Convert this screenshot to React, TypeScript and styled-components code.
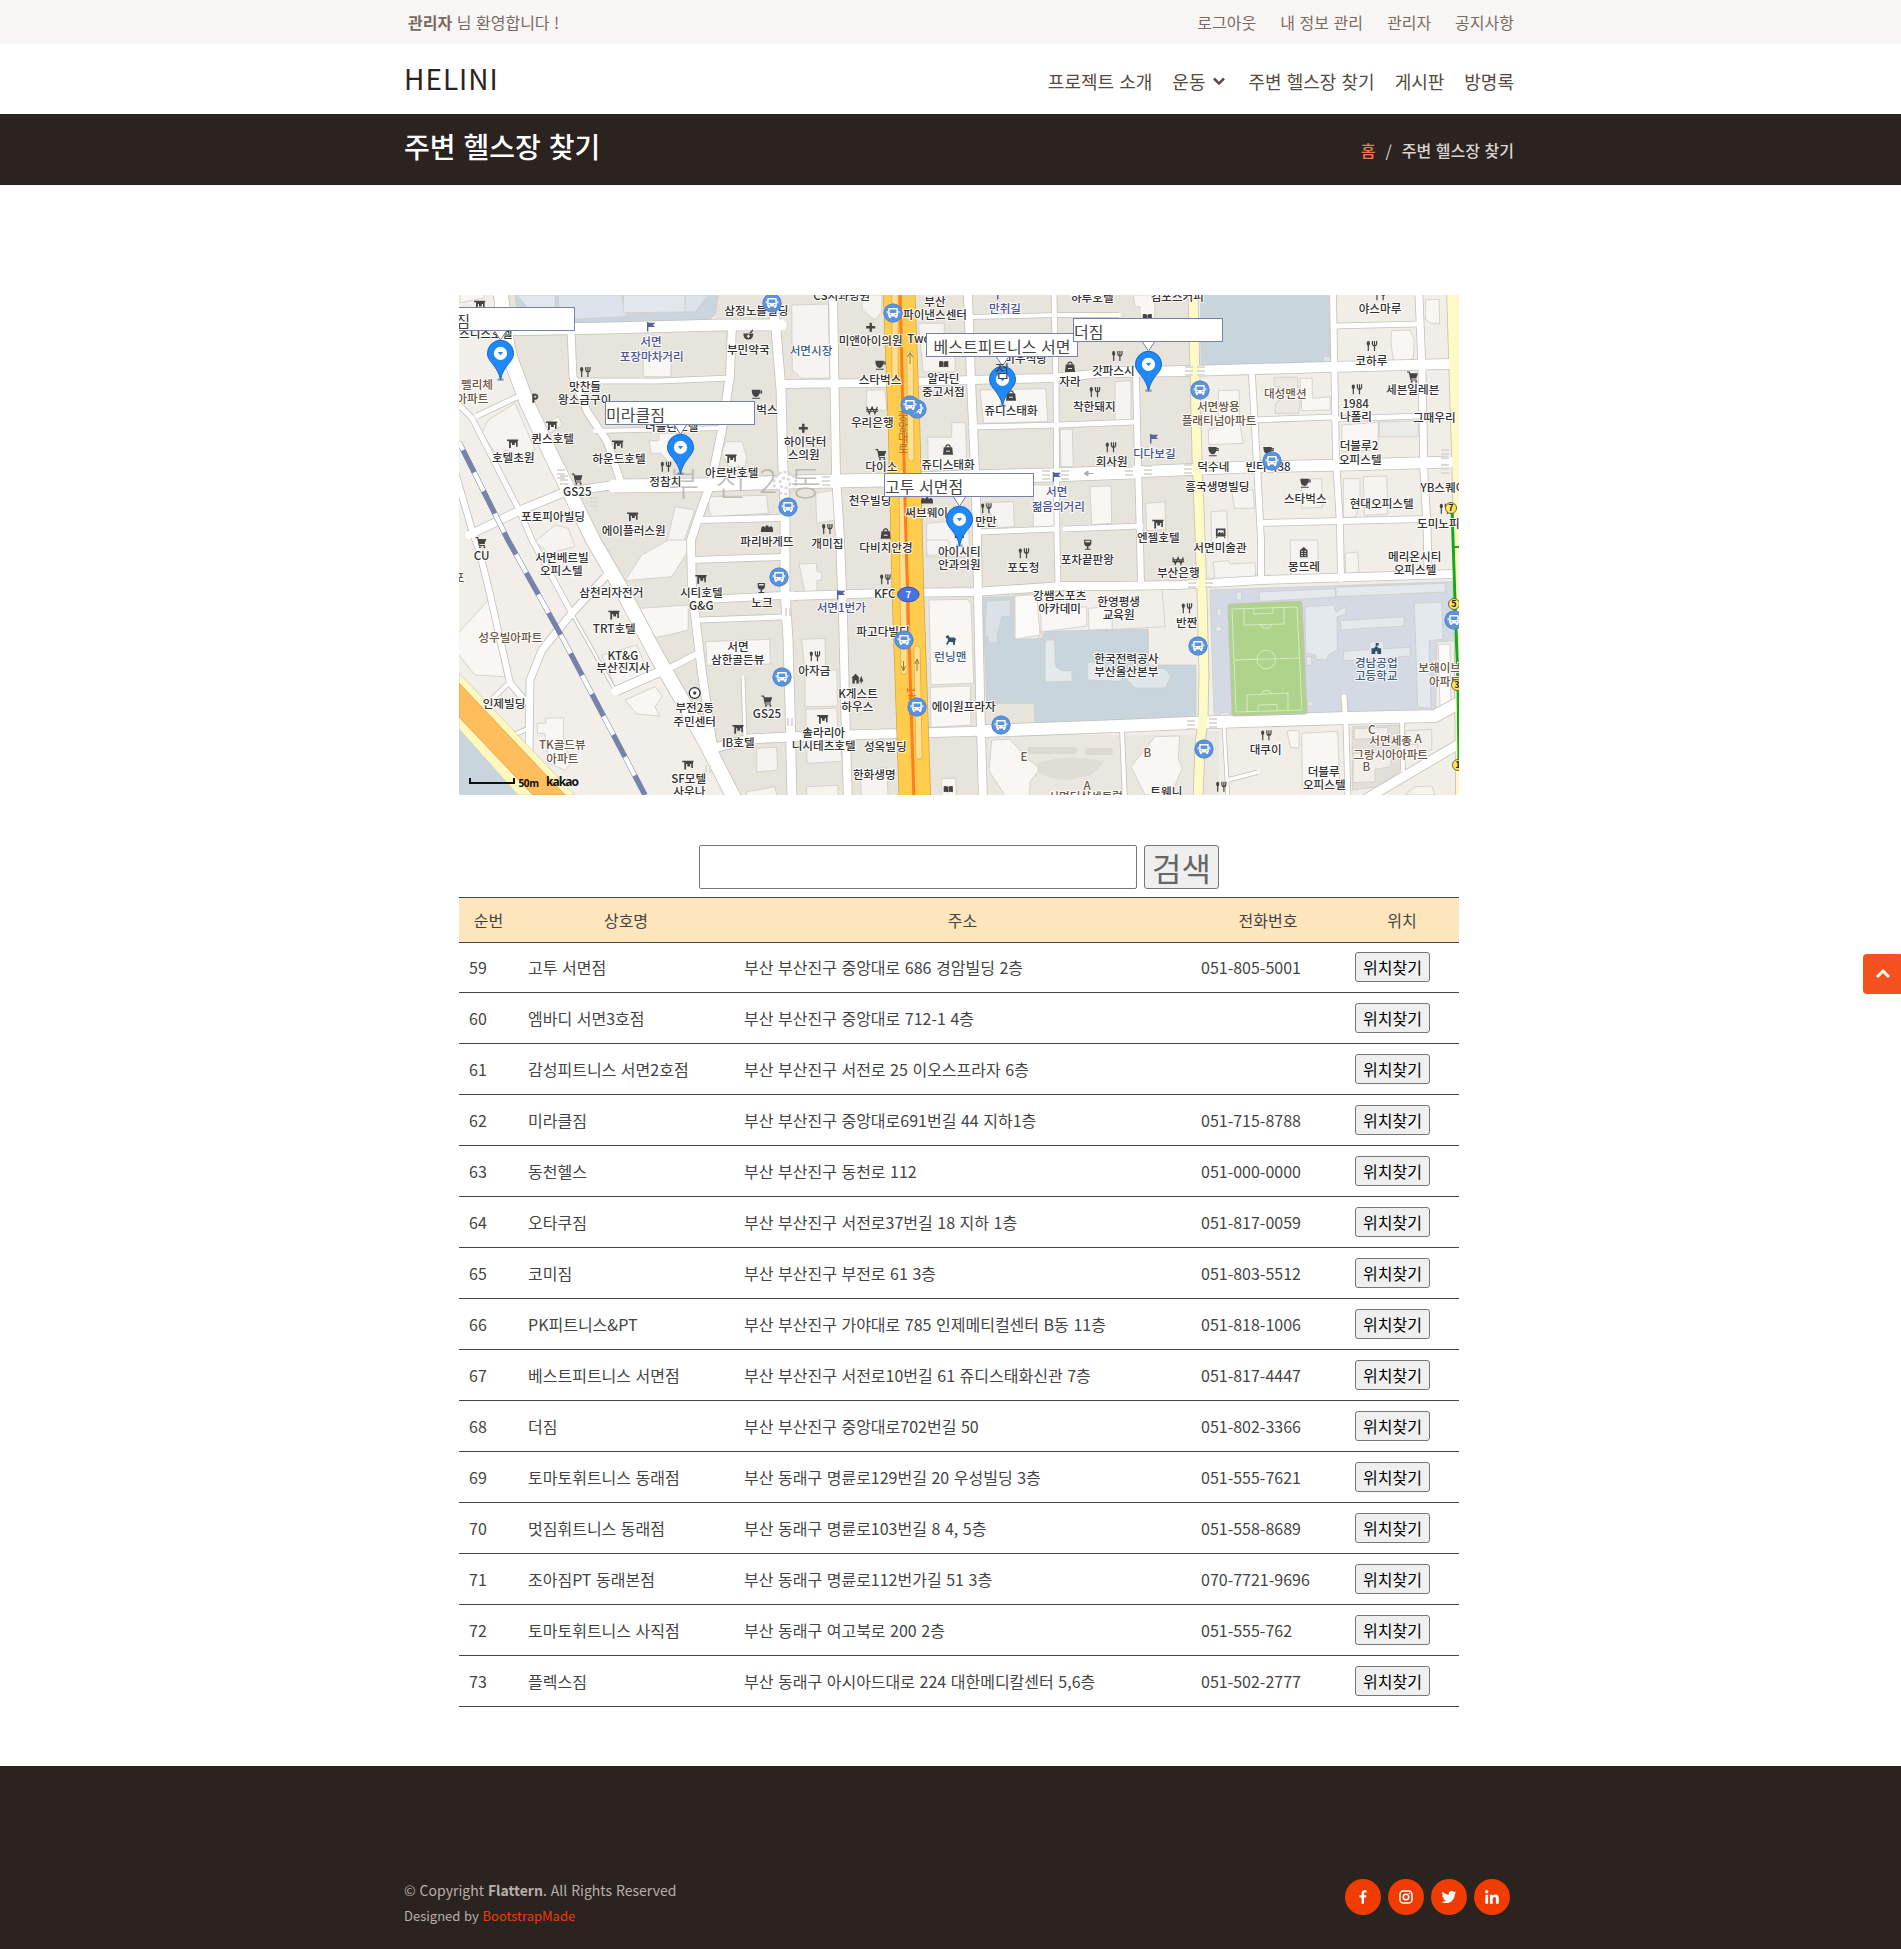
import React from "react";
import styled, { createGlobalStyle } from "styled-components";

const Global = createGlobalStyle`
  *, *::before, *::after { box-sizing: border-box; word-spacing: 0.06em; }
  body {
    margin: 0;
    background: #fff;
    color: #444;
    font: 16px/24px "Noto Sans CJK KR", "Noto Sans", sans-serif;
    overflow-x: hidden;
  }
  a { color: inherit; text-decoration: none; }
`;

/* ---------- page chrome ---------- */

const Viewport = styled.div`
  width: 100%;
  overflow: hidden;
  position: relative;
`;

const Page = styled.div`
  width: 1918px;
`;

const Container = styled.div`
  width: 1140px;
  margin: 0 auto;
  padding: 0 15px;
  display: flex;
  justify-content: space-between;
`;

const TopBar = styled.div`
  height: 44px;
  background: #f7f6f4;
  color: #7a6960;
  line-height: 44px;
`;

const Welcome = styled.div`
  padding-left: 4px;
`;

const TopMenu = styled.nav`
  display: flex;
  gap: 24px;
`;

const Header = styled.header`
  height: 70px;
  background: #fff;
`;

const Logo = styled.a`
  font-size: 28px;
  line-height: 68px;
  letter-spacing: 1px;
  color: #2b2320;
`;

const Nav = styled.nav`
  display: flex;
  gap: 20px;
  font-size: 18px;
  line-height: 74px;
  height: 70px;
  color: #554a44;
`;

const NavItem = styled.a`
  display: flex;
  align-items: center;
  height: 74px;
  svg { margin-left: 4px; margin-right: -1px; }
`;

const Breadcrumbs = styled.section`
  height: 71px;
  background: #2b2320;
  color: #fff;
`;

const Title = styled.h2`
  margin: 0;
  font-size: 28px;
  font-weight: 500;
  line-height: 65px;
`;

const Crumbs = styled.div`
  display: flex;
  gap: 10px;
  line-height: 72px;
  font-weight: 500;
  color: #dbd4d0;
`;

const CrumbLink = styled.a`
  color: #ef7a52;
`;

const CrumbSlash = styled.span`
  font-weight: 400;
`;

/* ---------- content ---------- */

const Main = styled.main`
  width: 1000px;
  margin: 0 auto;
  padding: 110px 0 59px;
`;

const MapFrame = styled.div`
  position: relative;
  width: 1000px;
  height: 500px;
  overflow: hidden;
  background: #e7e4dc;
  > svg { display: block; }
`;

const InfoWindow = styled.div<{ $x: number; $y: number; $center?: boolean }>`
  position: absolute;
  left: ${(p) => p.$x}px;
  top: ${(p) => p.$y}px;
  width: ${(p) => (p.$center ? 152 : 150)}px;
  height: 24px;
  background: #fff;
  border: 1px solid #7682a9;
  font-size: 16px;
  line-height: 24px;
  color: #444;
  text-align: ${(p) => (p.$center ? "center" : "left")};
`;

const Search = styled.form`
  display: flex;
  justify-content: center;
  gap: 7px;
  margin: 50px 0 8px;
`;

const SearchInput = styled.input`
  width: 438px;
  height: 44px;
  border: 1px solid #767676;
  border-radius: 2px;
  background: #fff;
  font: 30px "Noto Sans CJK KR", sans-serif;
`;

const SearchButton = styled.button`
  width: 75px;
  height: 44px;
  padding: 0;
  border: 1px solid #767676;
  border-radius: 3px;
  background: #efefef;
  color: #666;
  font: 32px/42px "Noto Sans CJK KR", sans-serif;
`;

const Table = styled.div`
  border-top: 1px solid #444;
`;

const Row = styled.div`
  display: grid;
  grid-template-columns: 59px 216px 457px 154px 114px;
  align-items: center;
  height: 51px;
  border-bottom: 1px solid #444;
`;

const HeadRow = styled(Row)`
  height: 45px;
  background: #fde5bd;
  text-align: center;
  & + div { height: 50px; padding-bottom: 1px; }
`;

const Cell = styled.div`
  padding: 0 10px;
  white-space: nowrap;
`;

const FindButton = styled.button`
  display: block;
  width: 75px;
  height: 30px;
  padding: 0;
  border: 1px solid #767676;
  border-radius: 3px;
  background: #efefef;
  color: #000;
  font: 16px/28px "Noto Sans CJK KR", sans-serif;
`;

/* ---------- footer ---------- */

const Footer = styled.footer`
  height: 183px;
  padding-top: 111px;
  background: #2b2320;
  color: #b9afaa;
`;

const Legal = styled.div`
  font-size: 14px;
  line-height: 26px;
`;

const Credit = styled.div`
  font-size: 13px;
  line-height: 26px;
  a { color: #f03c02; }
`;

const Social = styled.div`
  display: flex;
  gap: 7px;
  padding: 2px 4px 0 0;
`;

const SocialLink = styled.a`
  display: flex;
  align-items: center;
  justify-content: center;
  width: 36px;
  height: 36px;
  border-radius: 50%;
  background: #f03c02;
`;

const BackToTop = styled.a`
  position: absolute;
  left: 1863px;
  top: 954px;
  display: flex;
  align-items: center;
  justify-content: center;
  width: 40px;
  height: 40px;
  border-radius: 4px;
  background: #f4511e;
`;

/* ---------- map data ---------- */

type Pt = [number, number];

/* The survey sheets are drawn at three units to the pixel; each has its own origin. */
const SHEETS: Record<string, Pt> = {
  A: [-4, -5],
  B: [326, -5],
  C: [656, -5],
  D: [-4, 245],
  E: [326, 245],
  F: [656, 245],
};

const at = (sheet: string, x: number, y: number): Pt => [
  +(SHEETS[sheet][0] + x / 3).toFixed(1),
  +(SHEETS[sheet][1] + y / 3).toFixed(1),
];

const sheetPoints = (sheet: string, pts: string) =>
  pts
    .split(" ")
    .map((p) => {
      const [x, y] = p.split(",").map(Number);
      return at(sheet, x, y).join(",");
    })
    .join(" ");

/* width, then the centre line */
const ROADS: [number, string][] = [
  [14, "42,0 46,38 51,62 68,108 93,162 113,202 134,245 163,295 196,358 223,405 249,452 276,505"],
  [11, "40,35 150,33 262,30 322,30"],
  [7, "112,35 114,82 129,118 148,146 162,188"],
  [5, "114,86 200,86 272,83"],
  [4, "136,136 265,133"],
  [8, "273,30 271,80 263,135 252,188 242,215 232,245 233,295 243,378 251,432 255,460"],
  [8, "10,240 62,215 106,197 155,190"],
  [13, "155,191 240,190 330,187 426,185 509,182 593,180 673,177"],
  [11, "673,177 789,172 889,170 990,167"],
  [8, "374,0 377,180 381,245 384,320 387,445 389,505"],
  [9, "313,0 317,35 322,95 324,175 326,210 326,295 329,345 331,412 333,505"],
  [8, "322,89 420,88 512,85 592,83 656,77"],
  [10, "656,77 730,76 869,72 990,69"],
  [5, "512,132 600,130 676,127"],
  [5, "793,125 875,122"],
  [5, "875,124 962,121"],
  [8, "509,0 512,85 514,130 517,200 518,245 519,300 521,400 524,505"],
  [4, "509,22 600,20 660,20"],
  [5, "595,0 597,90 598,245 599,292"],
  [6, "677,80 679,172 681,245 682,290"],
  [6, "793,80 798,170 802,245 802,285"],
  [6, "874,0 877,165 881,230 882,284"],
  [7, "960,0 963,75 965,180 968,230 969,280"],
  [5, "876,31 960,29"],
  [6, "802,228 882,226 966,224"],
  [5, "606,234 682,231"],
  [5, "519,237 598,234"],
  [8, "334,301 426,298 516,297 603,291 656,291 720,290 802,285 994,279"],
  [7, "236,305 333,300"],
  [6, "233,265 322,262"],
  [6, "240,225 320,223"],
  [5, "241,325 323,322"],
  [9, "259,452 290,444 331,442 386,440 460,438 526,436"],
  [12, "526,436 660,431 756,427 889,423 976,421 998,409"],
  [3, "284,382 286,440"],
  [6, "211,373 236,360"],
  [7, "146,282 113,318 83,355 71,385 70,462"],
  [5, "-6,104 13,123 61,217 73,245 111,315"],
  [2.5, "111,315 156,395"],
  [9, "157,396 200,377"],
  [5, "18,121 58,102"],
  [6, "-6,170 13,235 20,255 30,295 51,388 66,406"],
  [4, "29,408 51,387"],
  [4, "50,442 68,434"],
  [4, "663,435 666,505"],
  [3, "765,430 769,505"],
  [3.5, "769,485 799,477"],
  [5, "885,402 887,430 889,505"],
  [4, "943,425 944,475"],
  [9, "905,505 1005,446"],
];

const YELLOW_ROADS: [number, string][] = [
  [9, "734,-2 738,162 741,240 743,300 745,380 744,425 741,450 739,505"],
  [12, "994,-2 999,160 1001,240 1003,505"],
];

/* sheet, shade, outline */
const LOTS: [string, string, string][] = [
  ["A", "#cbd5dd", "180,10 790,10 782,70 760,92 360,110 345,100 190,100"],
  ["A", "#dde3ea", "310,15 500,15 508,62 720,66 760,15 690,15 690,60 520,62 510,80 310,90"],
  ["A", "#e2e7ed", "505,15 690,15 690,66 505,68"],
  ["A", "#e2e7ed", "185,15 300,15 300,95 255,95"],
  ["A", "#f8f7f4", "15,10 88,10 88,24 15,38"],
  ["A", "#f8f7f4", "565,205 648,205 648,260 565,260"],
  ["A", "#f8f7f4", "583,452 612,452 612,430 690,430 700,500 640,515 618,490 588,490"],
  ["A", "#f8f7f4", "270,400 310,380 322,405 282,430"],
  ["A", "#f5f4f1", "100,390 180,340 240,480 200,500 150,480 130,500 80,430"],
  ["A", "#f5f4f1", "812,455 860,455 875,500 870,530 820,530 800,490"],
  ["A", "#f5f4f1", "760,620 935,616 940,670 770,680 762,660"],
  ["A", "#f5f4f1", "660,650 720,660 670,800 600,830 640,740"],
  ["A", "#f5f4f1", "240,755 300,705 340,715 360,770 280,790"],
  ["B", "#f5f4f1", "20,45 130,42 135,265 50,265 22,240"],
  ["B", "#f5f4f1", "230,15 290,15 290,65 270,90 232,60"],
  ["B", "#f5f4f1", "245,300 300,300 305,360 245,365"],
  ["B", "#f5f4f1", "400,100 478,100 478,160 510,180 510,246 415,246"],
  ["B", "#f5f4f1", "428,442 500,442 500,398 542,398 545,540 430,540"],
  ["B", "#f8f7f4", "585,300 782,296 788,395 596,400"],
  ["B", "#f5f4f1", "600,638 685,635 688,710 640,714"],
  ["B", "#f8f7f4", "745,585 805,585 810,708 745,712"],
  ["B", "#f8f7f4", "915,590 978,588 980,700 920,704"],
  ["B", "#f5f4f1", "825,418 862,418 865,530 828,530"],
  ["B", "#f5f4f1", "425,700 550,690 555,800 425,800"],
  ["B", "#f5f4f1", "92,610 150,600 152,690 95,700"],
  ["C", "#f8f7f4", "55,15 120,15 118,130 75,130 75,50 60,50"],
  ["C", "#c9d5dc", "256,10 640,10 646,215 258,228"],
  ["C", "#e1e8ed", "626,200 646,199 646,215 626,217"],
  ["C", "#f8f7f4", "310,302 372,300 374,400 385,460 282,464 280,420 310,410"],
  ["C", "#ebe9e3", "478,262 548,262 548,290 556,290 556,340 550,370 480,370 482,340 495,330 495,290 478,290"],
  ["C", "#f8f7f4", "555,265 592,265 592,325 645,320 645,360 560,362"],
  ["C", "#f8f7f4", "830,122 885,120 898,150 895,205 870,215 835,210 828,160"],
  ["C", "#f8f7f4", "932,30 972,28 974,102 950,100 932,90"],
  ["C", "#f8f7f4", "680,405 790,397 790,480 680,485"],
  ["C", "#ebebe8", "793,395 910,392 910,440 793,440"],
  ["C", "#f5f4f1", "350,600 415,600 418,655 358,655"],
  ["C", "#f5f4f1", "560,568 620,566 622,652 560,655"],
  ["C", "#f5f4f1", "745,560 815,558 818,672 748,676"],
  ["C", "#f5f4f1", "685,566 735,566 735,640 722,680 685,684"],
  ["C", "#f5f4f1", "288,665 335,662 340,780 290,780"],
  ["C", "#f5f4f1", "92,640 150,635 152,720 95,722"],
  ["C", "#f5f4f1", "0,275 48,272 48,390 0,395"],
  ["D", "#f8f7f4", "0,290 100,180 150,410 60,405 0,330"],
  ["D", "#f8f7f4", "246,550 272,550 272,535 326,533 326,600 350,670 330,690 280,670 270,580 248,580"],
  ["D", "#f8f7f4", "510,480 600,440 622,468 600,500 614,528 545,522"],
  ["D", "#f8f7f4", "560,45 640,0 720,0 650,110 510,122"],
  ["D", "#f8f7f4", "555,205 700,195 700,270 640,285 600,292"],
  ["D", "#f5f4f1", "440,345 545,315 580,400 480,440"],
  ["D", "#f8f7f4", "752,305 944,298 946,372 756,376"],
  ["D", "#f5f4f1", "905,625 965,622 968,690 905,696"],
  ["D", "#f5f4f1", "875,755 960,740 970,790 875,790"],
  ["E", "#f5f4f1", "42,72 95,70 96,95 110,97 110,120 96,122 96,158 60,158"],
  ["E", "#f5f4f1", "50,298 120,295 122,390 155,390 158,498 60,500 60,400"],
  ["E", "#f5f4f1", "62,508 155,504 158,560 172,664 66,670"],
  ["E", "#f5f4f1", "65,740 158,736 160,780 65,780"],
  ["E", "#f5f4f1", "225,690 305,684 310,780 230,780"],
  ["E", "#f8f7f4", "432,180 546,178 558,190 566,430 438,434"],
  ["E", "#f8f7f4", "436,442 556,438 558,555 438,562"],
  ["E", "#f8f7f4", "470,716 512,714 514,780 470,780"],
  ["E", "#f5f4f1", "424,0 490,0 500,45 426,45"],
  ["E", "#f1efe9", "690,165 1130,130 1140,260 765,280 758,300 690,298"],
  ["E", "#c9d5dc", "592,172 686,170 686,298 770,296 782,274 1090,268 1090,375 1233,375 1233,541 750,555 748,490 606,490"],
  ["E", "#dae2e8", "605,184 676,180 676,228 650,230 636,290 638,308 610,308 610,290 600,288"],
  ["E", "#e3e9ed", "780,300 808,300 812,380 830,392 860,392 862,424 780,426"],
  ["E", "#e3e9ed", "908,368 960,366 960,390 1010,390 1010,424 908,420"],
  ["E", "#fbfaf8", "690,168 755,164 765,285 690,298"],
  ["E", "#f8f7f4", "768,215 840,205 905,200 905,258 768,276"],
  ["E", "#f8f7f4", "910,205 980,200 982,268 912,270"],
  ["E", "#f8f7f4", "620,600 674,598 732,660 765,686 736,724 732,770 662,770 612,692"],
  ["F", "#d4dae3", "285,150 1012,125 1022,510 298,538"],
  ["F", "#e4e9ed", "432,156 660,146 662,172 434,184"],
  ["F", "#e4e9ed", "662,142 990,130 992,156 664,170"],
  ["F", "#e4e9ed", "570,200 655,195 664,215 692,200 692,224 666,230 667,330 640,345 636,360 602,358 602,344 572,340"],
  ["F", "#e4e9ed", "676,242 866,230 868,258 678,270"],
  ["F", "#e4e9ed", "764,306 806,304 806,326 886,322 886,348 686,362 686,334 764,328"],
  ["F", "#e4e9ed", "898,190 980,186 984,298 942,302 948,505 908,500"],
  ["F", "#e4e9ed", "574,350 590,350 590,376 574,376"],
  ["F", "#e4e9ed", "302,260 320,260 320,274 302,274"],
  ["F", "#e4e9ed", "306,205 318,205 318,228 306,228"],
  ["F", "#e4e9ed", "364,156 380,156 380,180 364,180"],
  ["F", "#e4e9ed", "578,485 595,485 595,498 578,498"],
  ["F", "#e4e9ed", "316,518 343,516 343,530 316,530"],
  ["F", "#f1efe9", "966,305 1018,303 1020,515 962,518"],
  ["F", "#fbfaf8", "970,313 1005,312 1008,504 975,506"],
  ["F", "#dfe6ea", "20,400 50,380 150,386 168,410 150,444 60,444 42,425"],
  ["F", "#f8f7f4", "120,590 194,588 190,655 202,685 170,760 90,765 48,680"],
  ["F", "#f8f7f4", "516,572 552,572 552,625 526,622"],
  ["F", "#f8f7f4", "560,580 668,574 674,738 562,742"],
  ["F", "#e2dfd8", "712,560 855,556 858,690 790,740 712,750"],
  ["F", "#f1efe9", "718,566 818,562 820,594 718,598"],
  ["F", "#f1efe9", "872,572 950,568 950,630 910,632 908,612 872,614"],
  ["F", "#f1efe9", "715,640 830,636 828,680 780,688 780,725 714,728"],
  ["F", "#f5f4f1", "870,765 900,740 950,738 960,765"],
  ["F", "#f5f4f1", "295,66 340,62 345,72 420,68 422,112 300,120"],
  ["F", "#f5f4f1", "525,0 608,0 610,104 528,106"],
  ["F", "#f5f4f1", "690,40 728,36 732,96 692,102"],
];

type Tone = "ink" | "home" | "street" | "place";

const TONES: Record<Tone, string> = {
  ink: "#333",
  home: "#6b5747",
  street: "#4a5590",
  place: "#3f6080",
};

/* sheet, centre x, centre y, name, tone */
const LABELS: [string, number, number, string, Tone?][] = [
  ["A", 92, 130, "스디스호텔"],
  ["A", 904, 62, "삼정노블빌딩"],
  ["A", 588, 155, "서면", "street"],
  ["A", 590, 200, "포장마차거리", "street"],
  ["A", 880, 178, "부민약국"],
  ["A", 66, 283, "펠리체", "home"],
  ["A", 52, 326, "아파트", "home"],
  ["A", 390, 290, "맛찬들"],
  ["A", 389, 328, "왕소금구이"],
  ["A", 936, 358, "벅스"],
  ["A", 650, 411, "더블린호텔"],
  ["A", 293, 447, "퀸스호텔"],
  ["A", 175, 502, "호텔초원"],
  ["A", 492, 505, "하운드호텔"],
  ["A", 631, 575, "정참치"],
  ["A", 830, 548, "아르반호텔"],
  ["A", 367, 605, "GS25"],
  ["A", 294, 680, "포토피아빌딩"],
  ["A", 536, 721, "에이플러스원"],
  ["A", 936, 754, "파리바게뜨"],
  ["B", 170, 18, "CS치과병원"],
  ["B", 78, 182, "서면시장", "place"],
  ["B", 257, 152, "미앤아이의원"],
  ["B", 450, 35, "부산"],
  ["B", 450, 73, "파이낸스센터"],
  ["B", 402, 147, "Two"],
  ["B", 660, 55, "만취길", "street"],
  ["B", 922, 24, "하투호텔"],
  ["B", 285, 270, "스타벅스"],
  ["B", 475, 265, "알라딘"],
  ["B", 475, 305, "중고서점"],
  ["B", 722, 205, "미우식당"],
  ["B", 855, 275, "자라"],
  ["B", 985, 242, "갓파스시"],
  ["B", 262, 399, "우리은행"],
  ["B", 678, 361, "쥬디스태화"],
  ["B", 928, 350, "착한돼지"],
  ["B", 60, 454, "하이닥터"],
  ["B", 56, 493, "스의원"],
  ["B", 289, 530, "다이소"],
  ["B", 489, 523, "쥬디스태화"],
  ["B", 980, 515, "회사원"],
  ["B", 255, 631, "천우빌딩"],
  ["B", 815, 605, "서면", "street"],
  ["B", 820, 650, "젊음의거리", "street"],
  ["B", 425, 668, "써브웨이"],
  ["B", 603, 696, "만만"],
  ["B", 127, 761, "개미집"],
  ["B", 303, 774, "다비치안경"],
  ["C", 187, 21, "김포스커피"],
  ["C", 795, 56, "야스마루"],
  ["C", 769, 213, "코하루"],
  ["C", 893, 299, "세븐일레븐"],
  ["C", 511, 310, "대성맨션", "home"],
  ["C", 310, 350, "서면쌍용", "home"],
  ["C", 312, 391, "플래티넘아파트", "home"],
  ["C", 722, 342, "1984"],
  ["C", 723, 379, "나폴리"],
  ["C", 958, 382, "그때우리"],
  ["C", 118, 490, "디다보길", "street"],
  ["C", 732, 468, "더블루2"],
  ["C", 736, 509, "오피스텔"],
  ["C", 295, 529, "덕수네"],
  ["C", 459, 529, "빈티지38"],
  ["C", 307, 590, "흥국생명빌딩"],
  ["C", 571, 626, "스타벅스"],
  ["C", 800, 641, "현대오피스텔"],
  ["C", 985, 593, "YB스퀘어"],
  ["C", 986, 700, "도미노피자"],
  ["C", 130, 743, "엔젤호텔"],
  ["C", 315, 773, "서면미술관"],
  ["D", 80, 47, "CU"],
  ["D", 12, 112, "포", "home"],
  ["D", 321, 52, "서면베르빌"],
  ["D", 319, 92, "오피스텔"],
  ["D", 469, 158, "삼천리자전거"],
  ["D", 739, 158, "시티호텔"],
  ["D", 739, 196, "G&G"],
  ["D", 921, 188, "노크"],
  ["D", 478, 266, "TRT호텔"],
  ["D", 166, 293, "성우빌아파트", "home"],
  ["D", 504, 347, "KT&G"],
  ["D", 504, 384, "부산진지사"],
  ["D", 849, 320, "서면"],
  ["D", 848, 359, "삼한골든뷰"],
  ["D", 147, 490, "인제빌딩"],
  ["D", 719, 504, "부전2동"],
  ["D", 719, 545, "주민센터"],
  ["D", 936, 521, "GS25"],
  ["D", 850, 607, "IB호텔"],
  ["D", 322, 614, "TK골드뷰", "home"],
  ["D", 322, 655, "아파트", "home"],
  ["D", 701, 716, "SF모텔"],
  ["D", 703, 754, "사우나"],
  ["E", 523, 35, "아이시티"],
  ["E", 523, 75, "안과의원"],
  ["E", 715, 83, "포도청"],
  ["E", 907, 59, "포차끝판왕"],
  ["E", 299, 160, "KFC"],
  ["E", 169, 203, "서면1번가", "street"],
  ["E", 824, 166, "강쌤스포츠"],
  ["E", 824, 206, "아카데미"],
  ["E", 1001, 184, "한영평생"],
  ["E", 1001, 224, "교육원"],
  ["E", 294, 275, "파고다빌딩"],
  ["E", 496, 349, "런닝맨", "place"],
  ["E", 88, 391, "아자금"],
  ["E", 1024, 356, "한국전력공사"],
  ["E", 1024, 396, "부산울산본부"],
  ["E", 219, 461, "K게스트"],
  ["E", 217, 500, "하우스"],
  ["E", 536, 499, "에이원프라자"],
  ["E", 116, 577, "솔라리아"],
  ["E", 116, 617, "니시테츠호텔"],
  ["E", 301, 620, "성옥빌딩"],
  ["E", 268, 704, "한화생명"],
  ["E", 717, 650, "E", "home"],
  ["E", 906, 737, "A", "home"],
  ["E", 902, 771, "서면더샵센트럴", "home"],
  ["F", 190, 98, "부산은행"],
  ["F", 567, 80, "몽뜨레"],
  ["F", 899, 50, "메리온시티"],
  ["F", 900, 90, "오피스텔"],
  ["F", 215, 248, "반짠"],
  ["F", 784, 369, "경남공업", "place"],
  ["F", 784, 408, "고등학교", "place"],
  ["F", 974, 382, "보해이브", "home"],
  ["F", 990, 424, "아파트", "home"],
  ["F", 452, 630, "대쿠이"],
  ["F", 97, 638, "B", "home"],
  ["F", 770, 569, "C", "home"],
  ["F", 827, 602, "서면세종", "home"],
  ["F", 909, 596, "A", "home"],
  ["F", 827, 643, "그랑시아아파트", "home"],
  ["F", 754, 680, "B", "home"],
  ["F", 626, 694, "더블루"],
  ["F", 628, 735, "오피스텔"],
  ["F", 154, 756, "트웨니"],
];

type Glyph =
  | "food" | "hotel" | "cart" | "cup" | "cross" | "won" | "bag" | "book"
  | "glass" | "flag" | "bread" | "pot" | "art" | "tower" | "school" | "horse" | "house" | "park" | "office";

const POIS: [string, number, number, Glyph][] = [
  ["A", 75, 45, "hotel"], ["A", 588, 110, "flag"], ["A", 880, 135, "pot"], ["A", 389, 246, "food"],
  ["A", 240, 325, "park"], ["A", 905, 313, "cup"], ["A", 291, 407, "hotel"], ["A", 174, 461, "hotel"],
  ["A", 489, 464, "hotel"], ["A", 631, 530, "food"], ["A", 829, 506, "hotel"], ["A", 367, 566, "cart"],
  ["A", 534, 680, "hotel"], ["A", 936, 718, "bread"], ["A", 78, 757, "cart"],
  ["B", 257, 112, "cross"], ["B", 286, 226, "cup"], ["B", 476, 223, "book"], ["B", 648, 14, "flag"],
  ["B", 855, 232, "bag"], ["B", 995, 198, "food"], ["B", 928, 306, "food"], ["B", 262, 361, "won"],
  ["B", 678, 318, "bag"], ["B", 55, 415, "cross"], ["B", 288, 493, "cart"], ["B", 489, 480, "bag"],
  ["B", 976, 472, "food"], ["B", 815, 560, "flag"], ["B", 426, 633, "bread"], ["B", 602, 655, "food"],
  ["B", 125, 717, "food"], ["B", 302, 732, "bag"], ["B", 523, 740, "cross"],
  ["C", 97, 82, "book"], ["C", 795, 16, "food"], ["C", 769, 168, "food"], ["C", 893, 260, "cart"],
  ["C", 724, 298, "food"], ["C", 117, 446, "flag"], ["C", 295, 485, "cup"], ["C", 460, 485, "cup"],
  ["C", 571, 580, "cup"], ["C", 988, 656, "food"], ["C", 130, 702, "hotel"], ["C", 317, 729, "art"],
  ["D", 739, 118, "hotel"], ["D", 919, 144, "glass"], ["D", 478, 225, "hotel"], ["D", 719, 459, "office"],
  ["D", 936, 482, "cart"], ["D", 850, 568, "hotel"], ["D", 700, 675, "hotel"],
  ["E", 715, 40, "food"], ["E", 908, 14, "glass"], ["E", 299, 118, "food"], ["E", 168, 164, "flag"],
  ["E", 497, 300, "horse"], ["E", 88, 349, "food"], ["E", 216, 416, "house"], ["E", 114, 538, "hotel"],
  ["E", 490, 748, "book"],
  ["F", 190, 62, "won"], ["F", 566, 37, "tower"], ["F", 214, 205, "food"], ["F", 784, 326, "school"],
  ["F", 452, 586, "food"], ["F", 317, 740, "food"],
];

const BUSES: Pt[] = [
  [313, 8], [329, 212], [434, 18], [458, 114], [451, 110], [741, 95], [813, 166], [320, 282],
  [323, 382], [445, 345], [458, 412], [542, 430], [739, 351], [745, 454], [995, 325],
];

const SHAPES: Record<Glyph, React.ReactNode> = {
  food: (
    <g stroke="#444" strokeWidth="1.2" fill="none">
      <ellipse cx="-3" cy="-2.6" rx="1.6" ry="2.3" fill="#444" stroke="none" />
      <path d="M-3-1V5M3.2-5V5M1.1-5V-2Q1.4 0 3.2 0T5.3-2V-5" />
    </g>
  ),
  hotel: <path d="M-6-4.200H5.200V-2.800H4.600V3H3V-1H1.800V1.400H-1V-1H-2.200V4.400H-4V-2.800H-6Z" />,
  cart: (
    <g>
      <path d="M-5.5-5.2H-3L-2.4-3.4H5.2L3.6 1.8H-1.6L-1.2 2.8H4V3.8H-2.2L-3.8-4H-5.5Z" />
      <circle cx="-1" cy="5" r="1" />
      <circle cx="3.4" cy="5" r="1" />
    </g>
  ),
  cup: <path d="M-5-4.6H3.4V-3.8H5.4V-.8H2.8Q2 2.6-1 2.6-4.8 2.2-5-4.6ZM3.4-2.8V-1.8H4.3V-2.8ZM-4.4 3.5H3.4V4.5H-4.4Z" />,
  cross: <path d="M-1.2-4.5H1.2V-1.2H4.5V1.2H1.2V4.5H-1.2V1.2H-4.5V-1.2H-1.2Z" />,
  won: <path d="M-5.5-3.5L-3 3.5-.2-3.3 2.6 3.5 5-3.5M-6-.8H5.8M-6 .9H5.8" fill="none" stroke="#444" strokeWidth="1.1" />,
  bag: (
    <g>
      <path d="M-2-2.5V-4Q0-6.4 2-4V-2.5" fill="none" stroke="#444" strokeWidth="1.2" />
      <path d="M-4.2-2.8H4.2L5 4.8H-5Z" />
      <path d="M-2 1.2H2" stroke="#e7e4dc" />
    </g>
  ),
  book: <path d="M-4.6-3Q-2-4-.2-2.6V3Q-2.2 2-4.6 3ZM.2-2.6Q2-4 4.6-3V3Q2.2 2 .2 3Z" />,
  glass: <path d="M-3.6-5H3.6V-1Q3 1.4.7 1.8V4H2.8V5H-2.8V4H-.7V1.8Q-3 1.4-3.6-1ZM-2.4-4V-2.4H2.4V-4Z" />,
  flag: <path d="M-4-4.6H-2.6V-4H4.4L2-1.6 4 .4H-2.6V4.8H-4Z" fill="#58639b" />,
  bread: <path d="M-6 2.6Q-6.4-3-3.6-3-2.4-3-2-1.6-1.4-4 0-4T2-1.6Q2.4-3 3.6-3 6.4-3 6 2.6Z" />,
  pot: (
    <g>
      <path d="M-5-1.5H5Q5 4.6 0 4.6T-5-1.5ZM1-2L4-5.6 5-4.8 3-2Z" />
      <path d="M0-.5V3M-1.7 1.2H1.7" stroke="#fff" />
    </g>
  ),
  art: (
    <g>
      <rect x="-4.8" y="-4.5" width="9.6" height="8" />
      <path d="M-3-2.8H3V1.8H-3Z" fill="#eee" />
      <path d="M-3 1.8L-1-.8.4.8 1.6-.4 3 1.8ZM-3.4 3.5L-4.4 5.2M3.4 3.5L4.4 5.2" stroke="#444" />
    </g>
  ),
  tower: (
    <g>
      <path d="M-3.8 5V-2L0-5.4 3.8-2V5Z" />
      <path d="M-2.4-1H-.7M.7-1H2.4M-2.4 1.2H-.7M.7 1.2H2.4M-2.4 3.4H-.7M.7 3.4H2.4" stroke="#fff" strokeWidth=".9" />
    </g>
  ),
  school: <path d="M-.6-5.6H3L2-4.4 3-3.2H.5V-2.2L2.6-.4H4.8V5.2H1V2.6H-1V5.2H-4.8V-.4H-2.6L-.6-2.2Z" fill="#35506c" />,
  horse: <path d="M-5-3.4L-2.4-5 -1-2.4H3.6L5.4-.8 4.6.6 4 5H2.6L2 2H-1.4L-3.4 4.8-4.8 4.2-2.8.8-3-1.8-4.4-1.8Z" fill="#35506c" />,
  house: <path d="M-5.6-.6L-1.4-5 2.6-.6H1.8V4.8H-4.6V-.6ZM4.2-3L6.4 2.8H4.7V4.8H3.7V2.8H2.2ZM-2.2 1.6V4.8H-.6V1.6Z" />,
  park: <path d="M-2.4-4.4H.6Q3-4.2 3-1.6T.6 1.2H-.9V4.2H-2.4ZM-.9-3V-.2H.3Q1.4-.4 1.4-1.6T.3-3Z" stroke="#444" strokeWidth=".6" />,
  office: (
    <g>
      <circle r="5.4" fill="#fff" stroke="#222" strokeWidth="1.200" />
      <circle r="1.7" />
    </g>
  ),
};

const Bus = ({ p }: { p: Pt }) => (
  <g transform={`translate(${p[0]} ${p[1]})`}>
    <circle r="9.6" fill="#5c93da" />
    <circle r="9" fill="none" stroke="#4f86cf" strokeWidth=".8" />
    <path
      d="M-3.6-5H3.6Q4.8-5 4.8-3.8V3.4H4V5H2.2V3.4H-2.2V5H-4V3.4H-4.8V-3.8Q-4.8-5-3.6-5ZM-3.4-3.4V0H3.4V-3.4ZM-3.4 1.2V2.3H-1.8V1.2ZM1.8 1.2V2.3H3.4V1.2Z"
      fill="#fff"
      fillRule="evenodd"
    />
    <path d="M-5.8-2V.4M5.8-2V.4" stroke="#fff" />
  </g>
);

const Pin = ({ p }: { p: Pt }) => (
  <g transform={`translate(${p[0]} ${p[1]})`}>
    <ellipse cy="-.5" rx="3.5" ry="1.5" fill="#3a5f8d" opacity=".45" />
    <path
      d="M0 0C-1.6-8.4-5.2-12.6-9-17.4-11.4-20.4-13-23-13-26.7A13 13 0 0 1 13-26.7C13-23 11.4-20.4 9-17.4 5.2-12.6 1.6-8.4 0 0Z"
      fill="#2089f8"
      stroke="#1565c8"
      strokeWidth="1"
    />
    <circle cy="-26.6" r="6.6" fill="#fff" />
    <path d="M-2.7-28H2.7L0-24.8Z" fill="#2089f8" />
  </g>
);

const Tail = ({ p }: { p: Pt }) => (
  <path d={`M${p[0] - 6} ${p[1]}L${p[0]} ${p[1] + 9}L${p[0] + 6} ${p[1]}`} fill="#fff" stroke="#7682a9" strokeWidth="1" />
);

const PINS: { tip: Pt; box: Pt; name: string; center?: boolean }[] = [
  { tip: [41.5, 85], box: [-34, 12], name: "코미짐" },
  { tip: [221.5, 179], box: [146, 106], name: "미라클짐" },
  { tip: [543.5, 111], box: [467, 38], name: "베스트피트니스 서면점", center: true },
  { tip: [689.5, 96], box: [614, 23], name: "더짐" },
  { tip: [500.5, 251], box: [425, 178], name: "고투 서면점" },
];

const Crosswalk = ({ x, y, v }: { x: number; y: number; v?: boolean }) => (
  <path
    d={v ? `M${x} ${y}v8M${x + 4} ${y}v8` : `M${x} ${y}h8M${x} ${y + 4}h8M${x} ${y + 8}h8`}
    stroke="#dddbd5"
    strokeWidth="2.2"
  />
);

const STRIPS: Pt[][] = [
  [[436, -6], [436, 82]],
  [[451, 59], [452, 163]],
  [[443, 178], [445, 376]],
  [[458, 354], [460, 461]],
];

const StationMap = () => (
  <svg width="1000" height="500" viewBox="0 0 1000 500">
    <rect width="1000" height="500" fill="#e7e4dc" />
    <path d="M0 0H42L51 62 93 162 134 245 196 358 276 500H0Z" fill="#f2efea" />
    <path d="M736 0H1000V500H741L745 400Z" fill="#f1eee8" />
    <path d="M524 436H760V500H524Z" fill="#eae7e0" />
    <path d="M600 291H745V440H600Z" fill="#f1eee8" />
    <path d="M0 378L116 500H0Z" fill="#c9d5dc" />
    <g stroke="#cfccc6" strokeWidth=".8" strokeLinejoin="round">
      {LOTS.map(([s, fill, pts], i) => (
        <polygon key={i} points={sheetPoints(s, pts)} fill={fill} />
      ))}
    </g>
    <g fill="#dcd9d2">
      <rect x="568" y="452" width="50" height="7" rx="3" />
      <rect x="626" y="453" width="28" height="7" rx="3" />
      <path d="M578 468Q610 458 645 466 636 482 622 482 600 490 578 476Z" opacity=".7" />
    </g>

    <g fill="none" strokeLinejoin="round" stroke="#c3c1bb">
      {[...ROADS, ...YELLOW_ROADS].map(([w, pts], i) => (
        <polyline key={i} points={pts} strokeWidth={w + 1.6} />
      ))}
    </g>
    <g fill="none" strokeLinejoin="round" strokeLinecap="round" stroke="#fff">
      {ROADS.map(([w, pts], i) => (
        <polyline key={i} points={pts} strokeWidth={w} />
      ))}
    </g>
    <g fill="none" strokeLinejoin="round" stroke="#fefac6">
      {YELLOW_ROADS.map(([w, pts], i) => (
        <polyline key={i} points={pts} strokeWidth={w} />
      ))}
    </g>

    <Crosswalk x={98} y={175} />
    <Crosswalk x={131} y={203} />
    <Crosswalk x={101} y={181} />
    <Crosswalk x={666} y={172} />
    <Crosswalk x={685} y={171} />
    <Crosswalk x={725} y={170} />
    <Crosswalk x={748} y={168} />
    <Crosswalk x={726} y={72} />
    <Crosswalk x={738} y={72} />
    <Crosswalk x={583} y={176} />
    <Crosswalk x={602} y={176} />
    <Crosswalk x={363} y={182} />
    <Crosswalk x={982} y={155} />
    <Crosswalk x={982} y={170} />
    <Crosswalk x={729} y={284} />
    <Crosswalk x={746} y={284} />
    <Crosswalk x={728} y={426} />
    <Crosswalk x={750} y={424} />
    <Crosswalk x={327} y={313} v />
    <Crosswalk x={329} y={423} v />
    <Crosswalk x={247} y={470} v />
    <g fill="none" stroke="#d8d6d0" strokeWidth="2.4" strokeDasharray="3 2">
      <circle cx="326" cy="188" r="5" />
      <circle cx="326" cy="188" r="11" />
    </g>

    <path d="M0 378L116 500H59L0 434Z" fill="#fdf8bd" stroke="#c9c6b8" strokeWidth=".6" />
    <path d="M0 388L106 500H74L0 422Z" fill="#ffbd5b" stroke="#dc9d48" strokeWidth=".8" />

    <polyline points="0,147 49,245 103,342 186,500" fill="none" stroke="#8a95b8" strokeWidth="5.4" />
    <polyline points="0,147 49,245 103,342 186,500" fill="none" stroke="#fff" strokeWidth="4.2" />
    <polyline
      points="0,147 49,245 103,342 186,500"
      fill="none"
      stroke="#7682a9"
      strokeWidth="5"
      strokeDasharray="25 21"
      strokeDashoffset="-9"
    />

    <polyline points="440,-5 445,130 449,300 456,505" fill="none" stroke="#c9a548" strokeWidth="32.4" />
    <polyline points="440,-5 445,130 449,300 456,505" fill="none" stroke="#ffcc4d" strokeWidth="31" />
    {STRIPS.map(([a, b], i) => (
      <g key={i} strokeLinecap="round">
        <path d={`M${a}L${b}`} stroke="#d7b04f" strokeWidth="7" />
        <path d={`M${a}L${b}`} stroke="#ffe093" strokeWidth="5.4" />
      </g>
    ))}
    <polyline points="441,-5 447,245 455,505" fill="none" stroke="#ff7d20" strokeWidth="3" />
    <path d="M451 69V58M448.5 62L451 57.500L453.500 62M458 376V365M444.500 366V375M442.500 371L444.500 376L446.500 371M456 369L458 364L460 369" fill="none" stroke="#9c7c34" />
    <text x="444" y="115" fontSize="11" fill="#9a7a2c" writingMode="vertical-rl">중앙대로</text>
    <text x="453" y="392" fontSize="11" fill="#f26a1c" writingMode="vertical-rl">1호선</text>

    <g strokeLinejoin="round">
      <path d="M771 311L841 308 846 417 775 419Z" fill="#aed38a" stroke="#c9bfc3" strokeWidth="5" />
      <path d="M771 311L841 308 846 417 775 419Z" fill="#aed38a" stroke="#aed38a" strokeWidth="2.500" />
      <g fill="none" stroke="#dcecc8" strokeWidth=".9">
        <path d="M773 314L838 312 843 415 777 417ZM775 365L840 363M785 314V330L825 329V313M795 313V319L814 318.500V312.500M788 417V400L829 398V415M799 416V410L818 409.500V415M801 330Q807 337 813 330M801 400Q807 391 813 399" />
        <circle cx="807.300" cy="364.500" r="9.300" />
      </g>
    </g>

    <polyline points="993,213 996,305 999,388 1000,470" fill="none" stroke="#17a81d" strokeWidth="3" />
    <path d="M995 252H1000" stroke="#17a81d" strokeWidth="2" />

    <g fontSize="34" fontWeight="300" fill="#b5b2ac" fillOpacity=".85">
      <text x="209" y="201">부</text>
      <text x="256" y="201">전</text>
      <text x="300" y="198">2</text>
      <text x="331" y="201">동</text>
    </g>
    <path d="M625 178.500H634M625 178.500L629 176V181Z" stroke="#aaa" fill="#aaa" />

    <g fill="#444">
      {POIS.map(([s, x, y, kind], i) => (
        <g key={i} transform={`translate(${at(s, x, y).join(" ")})`}>
          {SHAPES[kind]}
        </g>
      ))}
    </g>
    <g
      fontSize="11.6"
      fontWeight="500"
      textAnchor="middle"
      stroke="#fff"
      strokeOpacity=".85"
      strokeWidth="2.2"
      strokeLinejoin="round"
      paintOrder="stroke"
    >
      {LABELS.map(([s, x, y, name, tone = "ink"], i) => {
        const [px, py] = at(s, x, y);
        return (
          <text key={i} x={px} y={py + 4.2} fill={TONES[tone]}>
            {name}
          </text>
        );
      })}
    </g>

    <ellipse cx="449.300" cy="299.500" rx="10.800" ry="7.400" fill="#4a72e0" stroke="#3557b8" />
    <text x="449.300" y="303" fontSize="9.500" fontWeight="700" fill="#fff" textAnchor="middle">7</text>

    {BUSES.map((p, i) => (
      <Bus key={i} p={p} />
    ))}

    {(
      [
        ["7", 992, 213],
        ["5", 995, 309],
        ["3", 998, 390],
        ["1", 999, 470],
      ] as [string, number, number][]
    ).map(([n, x, y]) => (
      <g key={n}>
        <circle cx={x} cy={y} r="5.500" fill="#ffe94a" stroke="#555" strokeWidth=".9" />
        <text x={x} y={y + 3.2} fontSize="9" fontWeight="700" fill="#222" textAnchor="middle">{n}</text>
      </g>
    ))}

    {PINS.map((pin) => (
      <g key={pin.name}>
        <Pin p={pin.tip} />
        <Tail p={[pin.tip[0], pin.box[1] + 24]} />
      </g>
    ))}

    <path d="M11 483V488H55V483" fill="none" stroke="#111" strokeWidth="2" />
    <text x="59.500" y="492" fontSize="10" fontWeight="700" fill="#111" fontFamily="Open Sans, sans-serif" textLength="20.500">50m</text>
    <text x="87" y="491" fontSize="12" fontWeight="700" fill="#111" fontFamily="Open Sans, sans-serif" textLength="33">kakao</text>
  </svg>
);

/* ---------- table data ---------- */

const GYMS: [number, string, string, string][] = [
  [59, "고투 서면점", "부산 부산진구 중앙대로 686 경암빌딩 2층", "051-805-5001"],
  [60, "엠바디 서면3호점", "부산 부산진구 중앙대로 712-1 4층", ""],
  [61, "감성피트니스 서면2호점", "부산 부산진구 서전로 25 이오스프라자 6층", ""],
  [62, "미라클짐", "부산 부산진구 중앙대로691번길 44 지하1층", "051-715-8788"],
  [63, "동천헬스", "부산 부산진구 동천로 112", "051-000-0000"],
  [64, "오타쿠짐", "부산 부산진구 서전로37번길 18 지하 1층", "051-817-0059"],
  [65, "코미짐", "부산 부산진구 부전로 61 3층", "051-803-5512"],
  [66, "PK피트니스&PT", "부산 부산진구 가야대로 785 인제메티컬센터 B동 11층", "051-818-1006"],
  [67, "베스트피트니스 서면점", "부산 부산진구 서전로10번길 61 쥬디스태화신관 7층", "051-817-4447"],
  [68, "더짐", "부산 부산진구 중앙대로702번길 50", "051-802-3366"],
  [69, "토마토휘트니스 동래점", "부산 동래구 명륜로129번길 20 우성빌딩 3층", "051-555-7621"],
  [70, "멋짐휘트니스 동래점", "부산 동래구 명륜로103번길 8 4, 5층", "051-558-8689"],
  [71, "조아짐PT 동래본점", "부산 동래구 명륜로112번가길 51 3층", "070-7721-9696"],
  [72, "토마토휘트니스 사직점", "부산 동래구 여고북로 200 2층", "051-555-762"],
  [73, "플렉스짐", "부산 동래구 아시아드대로 224 대한메디칼센터 5,6층", "051-502-2777"],
];

const SOCIAL: React.ReactNode[] = [
  <path key="f" d="M13.397 20.997v-8.196h2.765l.411-3.209h-3.176V7.548c0-.926.258-1.56 1.587-1.56h1.684V3.127A22.336 22.336 0 0 0 14.201 3c-2.444 0-4.122 1.492-4.122 4.231v2.355H7.332v3.209h2.753v8.202h3.312z" />,
  <g key="i" fill="none" stroke="#fff" strokeWidth="2">
    <rect x="4" y="4" width="16" height="16" rx="4.500" />
    <circle cx="12" cy="12" r="3.700" />
    <circle cx="16.800" cy="7.200" r=".5" strokeWidth="1.200" />
  </g>,
  <path key="t" d="M19.633 7.997c.013.175.013.349.013.523 0 5.325-4.053 11.461-11.46 11.461-2.282 0-4.402-.661-6.186-1.809.324.037.636.05.973.05a8.07 8.07 0 0 0 5.001-1.721 4.036 4.036 0 0 1-3.767-2.793c.249.037.499.062.761.062.361 0 .724-.05 1.061-.137a4.027 4.027 0 0 1-3.23-3.953v-.05c.537.299 1.16.486 1.82.511a4.022 4.022 0 0 1-1.796-3.354c0-.748.199-1.434.548-2.032a11.457 11.457 0 0 0 8.306 4.215c-.062-.3-.1-.611-.1-.923a4.026 4.026 0 0 1 4.028-4.028c1.16 0 2.207.486 2.943 1.272a7.957 7.957 0 0 0 2.556-.973 4.02 4.02 0 0 1-1.771 2.22 8.073 8.073 0 0 0 2.319-.624 8.645 8.645 0 0 1-2.019 2.083z" />,
  <g key="l">
    <circle cx="4.983" cy="5.009" r="2.188" />
    <path d="M9.237 8.855v12.139h3.769v-6.003c0-1.584.298-3.118 2.262-3.118 1.937 0 1.961 1.811 1.961 3.218v5.904H21v-6.657c0-3.27-.704-5.783-4.526-5.783-1.835 0-3.065 1.007-3.568 1.96h-.051v-1.660zM3.095 8.855h3.774v12.139H3.095z" />
  </g>,
];

export default function App() {
  return (
    <Viewport>
      <Global />
      <Page>
        <TopBar>
          <Container>
            <Welcome>
              <strong>관리자</strong> 님 환영합니다 !
            </Welcome>
            <TopMenu>
              <a>로그아웃</a>
              <a>내 정보 관리</a>
              <a>관리자</a>
              <a>공지사항</a>
            </TopMenu>
          </Container>
        </TopBar>
        <Header>
          <Container>
            <Logo>HELINI</Logo>
            <Nav>
              <NavItem>프로젝트 소개</NavItem>
              <NavItem>
                운동
                <svg width="20" height="20" viewBox="0 0 24 24" fill="#554a44">
                  <path d="M16.939 7.939 12 12.879l-4.939-4.940-2.122 2.122L12 17.121l7.061-7.060z" />
                </svg>
              </NavItem>
              <NavItem>주변 헬스장 찾기</NavItem>
              <NavItem>게시판</NavItem>
              <NavItem>방명록</NavItem>
            </Nav>
          </Container>
        </Header>
        <Breadcrumbs>
          <Container>
            <Title>주변 헬스장 찾기</Title>
            <Crumbs>
              <CrumbLink>홈</CrumbLink>
              <CrumbSlash>/</CrumbSlash>
              <span>주변 헬스장 찾기</span>
            </Crumbs>
          </Container>
        </Breadcrumbs>

        <Main>
          <MapFrame>
            <StationMap />
            {PINS.map((pin) => (
              <InfoWindow key={pin.name} $x={pin.box[0]} $y={pin.box[1]} $center={pin.center}>
                {pin.name}
              </InfoWindow>
            ))}
          </MapFrame>
          <Search>
            <SearchInput type="text" />
            <SearchButton type="button">검색</SearchButton>
          </Search>
          <Table>
            <HeadRow>
              <Cell>순번</Cell>
              <Cell>상호명</Cell>
              <Cell>주소</Cell>
              <Cell>전화번호</Cell>
              <Cell>위치</Cell>
            </HeadRow>
            {GYMS.map(([no, name, address, phone]) => (
              <Row key={no}>
                <Cell>{no}</Cell>
                <Cell>{name}</Cell>
                <Cell>{address}</Cell>
                <Cell>{phone}</Cell>
                <Cell>
                  <FindButton type="button">위치찾기</FindButton>
                </Cell>
              </Row>
            ))}
          </Table>
        </Main>

        <Footer>
          <Container>
            <div>
              <Legal>
                © Copyright <strong>Flattern</strong>. All Rights Reserved
              </Legal>
              <Credit>
                Designed by <a>BootstrapMade</a>
              </Credit>
            </div>
            <Social>
              {SOCIAL.map((icon, i) => (
                <SocialLink key={i}>
                  <svg width="18" height="18" viewBox="0 0 24 24" fill="#fff">
                    {icon}
                  </svg>
                </SocialLink>
              ))}
            </Social>
          </Container>
        </Footer>
      </Page>
      <BackToTop>
        <svg width="24" height="24" viewBox="0 0 24 24" fill="none" stroke="#fff" strokeWidth="3">
          <path d="M6 15l6-6 6 6" />
        </svg>
      </BackToTop>
    </Viewport>
  );
}
